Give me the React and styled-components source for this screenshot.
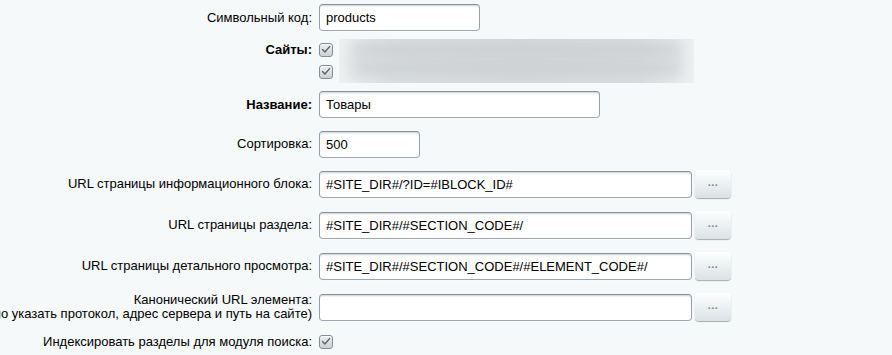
import React from 'react';
import styled, { createGlobalStyle } from 'styled-components';

const GlobalStyle = createGlobalStyle`
  html, body {
    margin: 0;
    padding: 0;
    background: #f5f9f9;
    overflow: hidden;
  }
  body {
    font-family: "Liberation Sans", Arial, sans-serif;
    font-size: 13px;
    color: #000;
  }
`;

const Form = styled.div`
  width: 892px;
  display: flex;
  flex-direction: column;
`;

const Row = styled.div`
  display: grid;
  grid-template-columns: 312px 1fr;
  column-gap: 7px;
  align-items: center;
  padding: ${(p) => p.$pad || '6.5px 0'};
`;

const Label = styled.div`
  display: flex;
  justify-content: flex-end;
  align-self: ${(p) => (p.$top ? 'start' : 'center')};
  white-space: nowrap;
  line-height: ${(p) => p.$lh || '14px'};
  font-weight: ${(p) => (p.$required ? 'bold' : 'normal')};
`;

const LabelText = styled.div`
  text-align: right;
`;

const Field = styled.div`
  display: flex;
  align-items: center;
  gap: 3px;
  min-height: 18px;
`;

const Input = styled.input`
  box-sizing: border-box;
  width: ${(p) => p.$w}px;
  height: 27px;
  padding: 0 6px;
  margin: 0;
  border: 1px solid;
  border-color: #87919c #959ea9 #9ea7b1 #959ea9;
  border-radius: 4px;
  background: #fff;
  box-shadow: 0 1px 0 0 rgba(255, 255, 255, 0.3), inset 0 2px 2px -1px rgba(180, 188, 191, 0.7);
  font-family: "Liberation Sans", Arial, sans-serif;
  font-size: 13px;
  color: #000;
  outline: none;
`;

const DotsButton = styled.button`
  box-sizing: border-box;
  width: 36px;
  height: 28px;
  margin: 0;
  padding: 0 0 4px;
  border: none;
  border-radius: 4px;
  background: linear-gradient(to bottom, #ffffff, #dae2e5);
  box-shadow: 0 0 1px rgba(0, 0, 0, 0.11), 0 1px 1px rgba(0, 0, 0, 0.3), inset 0 1px #fff;
  font-family: "Liberation Sans", Arial, sans-serif;
  font-size: 11px;
  font-weight: bold;
  letter-spacing: 0.5px;
  color: #7b858c;
  line-height: 1;
  cursor: pointer;
`;

const CheckBox = styled.span`
  box-sizing: border-box;
  display: inline-flex;
  align-items: center;
  justify-content: center;
  width: 14px;
  height: 14px;
  border: 1px solid #858e95;
  border-radius: 3px;
  background: linear-gradient(to bottom, #eceff0, #cbd1d4);
  box-shadow: inset 0 1px 0 rgba(255, 255, 255, 0.8);
`;

const SitesBox = styled.div`
  display: flex;
  align-items: stretch;
  gap: 6px;
`;

const CheckList = styled.div`
  display: flex;
  flex-direction: column;
`;

const CheckItem = styled.div`
  height: 22px;
  display: flex;
  align-items: center;
`;

const Blurred = styled.div`
  width: 355px;
  height: 44px;
  overflow: hidden;
  background: linear-gradient(to right, #eef1f2, #dcdfe1 15%, #d6d9db 50%, #dadde0 85%, #eef1f2);
`;

const BlurBar = styled.div`
  height: 14px;
  margin: 4px 12px;
  border-radius: 7px;
  background: #cdd1d3;
  filter: blur(7px);
`;

function Check() {
  return (
    <CheckBox>
      <svg width="10" height="9" viewBox="0 0 10 9">
        <path d="M1.5 4.6 L3.9 7 L8.6 1.6" fill="none" stroke="#59636b" strokeWidth="1.4" strokeLinecap="round" strokeLinejoin="round" />
      </svg>
    </CheckBox>
  );
}

const urlRows = [
  { label: 'URL страницы информационного блока:', value: '#SITE_DIR#/?ID=#IBLOCK_ID#' },
  { label: 'URL страницы раздела:', value: '#SITE_DIR#/#SECTION_CODE#/' },
  { label: 'URL страницы детального просмотра:', value: '#SITE_DIR#/#SECTION_CODE#/#ELEMENT_CODE#/' },
];

export default function App() {
  return (
    <>
      <GlobalStyle />
      <Form>
        <Row $pad="4px 0 6.5px">
          <Label>Символьный код:</Label>
          <Field>
            <Input $w={161} defaultValue="products" />
          </Field>
        </Row>

        <Row $pad="1px 0 2px">
          <Label $required $top $lh="22px">Сайты:</Label>
          <SitesBox>
            <CheckList>
              <CheckItem><Check /></CheckItem>
              <CheckItem><Check /></CheckItem>
            </CheckList>
            <Blurred>
              <BlurBar />
              <BlurBar />
            </Blurred>
          </SitesBox>
        </Row>

        <Row>
          <Label $required>Название:</Label>
          <Field>
            <Input $w={281} defaultValue="Товары" />
          </Field>
        </Row>

        <Row $pad="6px 0">
          <Label>Сортировка:</Label>
          <Field>
            <Input $w={101} defaultValue="500" />
          </Field>
        </Row>

        {urlRows.map((r) => (
          <Row key={r.label}>
            <Label>{r.label}</Label>
            <Field>
              <Input $w={373} defaultValue={r.value} />
              <DotsButton>...</DotsButton>
            </Field>
          </Row>
        ))}

        <Row>
          <Label>
            <LabelText>
              Канонический URL элемента:
              <br />
              (необходимо указать протокол, адрес сервера и путь на сайте)
            </LabelText>
          </Label>
          <Field>
            <Input $w={373} defaultValue="" />
            <DotsButton>...</DotsButton>
          </Field>
        </Row>

        <Row $pad="5px 0 6px">
          <Label $lh="18px">Индексировать разделы для модуля поиска:</Label>
          <Field>
            <Check />
          </Field>
        </Row>
      </Form>
    </>
  );
}
